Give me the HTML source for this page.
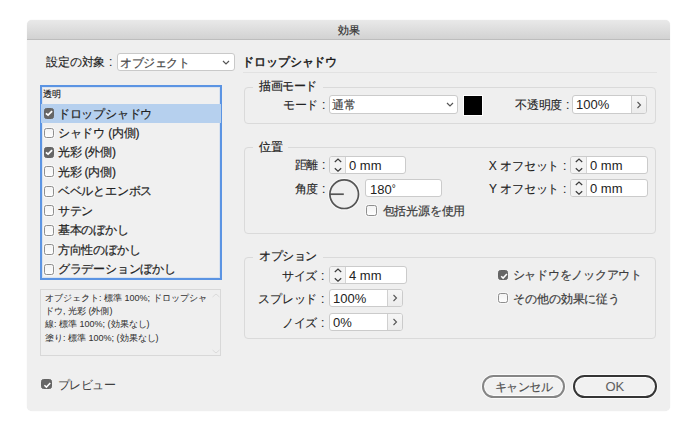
<!DOCTYPE html>
<html lang="ja">
<head>
<meta charset="utf-8">
<style>
*{box-sizing:border-box;margin:0;padding:0}
html,body{width:700px;height:436px;background:#fff;overflow:hidden}
body{font-family:"Liberation Sans",sans-serif;font-size:11px;color:#333;position:relative}
.a{position:absolute;white-space:nowrap}
#dlg{position:absolute;left:27px;top:20px;width:643px;height:391px;background:#efefef;border-radius:5px;box-shadow:0 0 1px rgba(0,0,0,.12)}
#title{position:absolute;left:27px;top:20px;width:643px;height:20px;border-radius:5px 5px 0 0;background:linear-gradient(#e9e9e9,#d2d2d2);border-bottom:1px solid #bdbdbd}
.lbl{font-size:12px;color:#222;line-height:14px;letter-spacing:-0.3px;word-spacing:1px;-webkit-text-stroke:0.1px #222}
.sel{background:#fff;border:1px solid #c9c9c9;border-radius:3px}
.grp{position:absolute;border:1.2px solid #dadada;border-radius:4px;background:#efefef}
.leg{position:absolute;background:#efefef;padding:0 6px;font-size:12px;letter-spacing:-0.5px;color:#222;line-height:13px;-webkit-text-stroke:0.2px #222}
.inp{position:absolute;background:#fff;border:1px solid #cbcbcb;border-radius:3px}
.cb{position:absolute;width:10.8px;height:10.8px;margin:-0.4px 0 0 -0.4px;border:1.5px solid #8e8e8e;border-radius:2.5px;background:linear-gradient(#f3f3f3,#fdfdfd);box-shadow:0 0 0 1px rgba(255,255,255,.5)}
.cb.on{background:#666;border-color:#646464;width:10.4px;height:10.4px;margin:-0.2px 0 0 -0.2px;box-shadow:none}
.cb.on svg{position:absolute;left:0;top:0}
.item{position:absolute;left:57.8px;font-size:12px;color:#222;line-height:14px;-webkit-text-stroke:0.2px #222;letter-spacing:-0.2px}
.chev{position:absolute}
</style>
</head>
<body>
<div id="dlg"></div>
<div id="title"></div>
<div class="a" style="left:337.5px;top:24px;font-size:11px;color:#333;line-height:13px;-webkit-text-stroke:0.2px #333">効果</div>

<!-- top row -->
<div class="a lbl" style="right:588px;top:55px">設定の対象 :</div>
<div class="a sel" style="left:116.5px;top:53px;width:118px;height:18px"></div>
<div class="a" style="left:120px;top:55.5px;font-size:12px;color:#4a4a4a;line-height:14px;letter-spacing:-0.4px;-webkit-text-stroke:0.2px #4a4a4a">オブジェクト</div>
<svg class="a" style="left:222px;top:60px" width="8" height="5" viewBox="0 0 8 5"><path d="M1 1 L4 4 L7 1" fill="none" stroke="#555" stroke-width="1.2"/></svg>
<div class="a" style="left:242px;top:55px;font-size:12px;color:#1a1a1a;line-height:14px;-webkit-text-stroke:0.45px #1a1a1a;letter-spacing:-0.1px">ドロップシャドウ</div>
<div class="a" style="left:243px;top:72px;width:414px;height:1px;background:#e2e2e2"></div>

<!-- effects list -->
<div class="a" style="left:39.5px;top:84.5px;width:182.5px;height:195.5px;border:2px solid #5b94e3;background:#f0f0f0;box-shadow:inset 0 0 0 1px rgba(170,200,240,.3)"></div>
<div class="a" style="left:42.5px;top:89px;font-size:9px;color:#1a1a1a;line-height:11px;-webkit-text-stroke:0.15px #1a1a1a">透明</div>
<div class="a" style="left:41px;top:104.2px;width:179.5px;height:19.3px;background:#b6d0ee"></div>
<div class="cb on" style="left:44px;top:108.5px"><svg width="10" height="10" viewBox="0 0 10 10" style="position:absolute;left:-1px;top:-1px"><path d="M1.9 5.3 L4.1 7.2 L8.1 3.1" fill="none" stroke="#fff" stroke-width="1.7"/></svg></div>
<div class="item" style="top:106.5px">ドロップシャドウ</div>
<div class="cb" style="left:44px;top:128.0px"></div>
<div class="item" style="top:126.0px">シャドウ (内側)</div>
<div class="cb on" style="left:44px;top:147.4px"><svg width="10" height="10" viewBox="0 0 10 10" style="position:absolute;left:-1px;top:-1px"><path d="M1.9 5.3 L4.1 7.2 L8.1 3.1" fill="none" stroke="#fff" stroke-width="1.7"/></svg></div>
<div class="item" style="top:145.4px">光彩 (外側)</div>
<div class="cb" style="left:44px;top:166.8px"></div>
<div class="item" style="top:164.8px">光彩 (内側)</div>
<div class="cb" style="left:44px;top:186.3px"></div>
<div class="item" style="top:184.3px">ベベルとエンボス</div>
<div class="cb" style="left:44px;top:205.8px"></div>
<div class="item" style="top:203.8px">サテン</div>
<div class="cb" style="left:44px;top:225.2px"></div>
<div class="item" style="top:223.2px">基本のぼかし</div>
<div class="cb" style="left:44px;top:244.7px"></div>
<div class="item" style="top:242.7px">方向性のぼかし</div>
<div class="cb" style="left:44px;top:264.1px"></div>
<div class="item" style="top:262.1px">グラデーションぼかし</div>

<!-- description -->
<div class="a" style="left:40px;top:289px;width:181px;height:67px;border:1px solid #d8d8d8;background:#efefef"></div>
<svg class="a" style="left:212px;top:293px" width="8" height="61" viewBox="0 0 8 61"><path d="M0.5 4 L4 1 L7.5 4 M0.5 57 L4 60 L7.5 57" fill="none" stroke="#dadada" stroke-width="1"/></svg>
<div class="a" style="left:45px;top:292.3px;font-size:9px;color:#333;line-height:13.1px;-webkit-text-stroke:0.05px #333">オブジェクト: 標準 100%; ドロップシャ<br>ドウ, 光彩 (外側)<br>線: 標準 100%; (効果なし)<br>塗り: 標準 100%; (効果なし)</div>

<!-- preview -->
<div class="cb on" style="left:41px;top:379px;width:11px;height:10px"><svg width="11" height="10" viewBox="0 0 11 10"><path d="M2.4 5.2 L4.4 7.1 L8.3 2.9" fill="none" stroke="#fff" stroke-width="1.5"/></svg></div>
<div class="a" style="left:57.5px;top:377.5px;font-size:12px;color:#404040;line-height:14px;letter-spacing:-0.4px;-webkit-text-stroke:0.05px #404040">プレビュー</div>

<!-- group: 描画モード -->
<div class="grp" style="left:243.5px;top:87px;width:412.5px;height:36.7px"></div>
<div class="leg" style="left:253px;top:80px">描画モード</div>
<div class="a lbl" style="right:375px;top:98px">モード :</div>
<div class="inp" style="left:328.7px;top:95px;width:129.3px;height:18.7px"></div>
<div class="a" style="left:332.3px;top:97.7px;font-size:12px;color:#4a4a4a;line-height:14px;-webkit-text-stroke:0.2px #4a4a4a">通常</div>
<svg class="a" style="left:446px;top:102px" width="8" height="5" viewBox="0 0 8 5"><path d="M1 1 L4 4 L7 1" fill="none" stroke="#555" stroke-width="1.2"/></svg>
<div class="a" style="left:463px;top:95px;width:20px;height:21px;background:#000;border:1px solid #fff"></div>
<div class="a lbl" style="right:131px;top:98px">不透明度 :</div>
<div class="inp" style="left:572px;top:95px;width:75px;height:19px;overflow:hidden"><div style="position:absolute;left:58px;top:0;width:16px;height:17px;border-left:1px solid #d0d0d0;background:linear-gradient(#f6f6f6,#ececec)"></div></div>
<div class="a" style="left:576px;top:97px;font-size:13px;color:#222;line-height:15px">100%</div>
<svg class="a" style="left:636px;top:101px" width="6" height="8" viewBox="0 0 6 8"><path d="M1.5 1 L4.5 4 L1.5 7" fill="none" stroke="#555" stroke-width="1.1"/></svg>

<!-- group: 位置 -->
<div class="grp" style="left:243.5px;top:147px;width:412.5px;height:86.5px"></div>
<div class="leg" style="left:253px;top:141px">位置</div>
<div class="a lbl" style="right:375px;top:158px">距離 :</div>
<div class="inp" style="left:329px;top:156px;width:77px;height:18px;overflow:hidden"><div style="position:absolute;left:0;top:0;width:16px;height:16px;border-right:1px solid #d4d4d4;background:#f3f3f3"></div></div>
<svg class="a" style="left:333.5px;top:158px" width="8" height="14" viewBox="0 0 8 14"><path d="M0.8 4 L4 1 L7.2 4 M0.8 10.2 L4 13.2 L7.2 10.2" fill="none" stroke="#3a3a3a" stroke-width="1.2"/></svg>
<div class="a" style="left:349px;top:158px;font-size:13px;color:#222;line-height:15px">0 mm</div>

<div class="a lbl" style="right:375px;top:182px">角度 :</div>
<svg class="a" style="left:327px;top:178px" width="35" height="35" viewBox="0 0 35 35"><circle cx="17.2" cy="16.2" r="15.6" fill="none" stroke="#fafafa" stroke-width="1.2"/><circle cx="17.2" cy="16.2" r="14.3" fill="none" stroke="#555" stroke-width="1.7"/><path d="M3 16.2 H16.8" stroke="#555" stroke-width="1.7"/></svg>
<div class="inp" style="left:365px;top:179px;width:77px;height:18px"></div>
<div class="a" style="left:370px;top:181px;font-size:13px;color:#222;line-height:15px">180<span style="font-size:10px;vertical-align:2px">°</span></div>
<div class="cb" style="left:366.5px;top:205.5px"></div>
<div class="a" style="left:382.5px;top:204px;font-size:12px;color:#3c3c3c;line-height:14px;letter-spacing:-0.2px;-webkit-text-stroke:0.2px #3c3c3c">包括光源を使用</div>

<div class="a lbl" style="right:134px;top:159px">X オフセット :</div>
<div class="inp" style="left:570px;top:156px;width:78px;height:18px;overflow:hidden"><div style="position:absolute;left:0;top:0;width:16px;height:16px;border-right:1px solid #d4d4d4;background:#f3f3f3"></div></div>
<svg class="a" style="left:574.5px;top:158px" width="8" height="14" viewBox="0 0 8 14"><path d="M0.8 4 L4 1 L7.2 4 M0.8 10.2 L4 13.2 L7.2 10.2" fill="none" stroke="#3a3a3a" stroke-width="1.2"/></svg>
<div class="a" style="left:590px;top:158px;font-size:13px;color:#222;line-height:15px">0 mm</div>

<div class="a lbl" style="right:134px;top:182px">Y オフセット :</div>
<div class="inp" style="left:570px;top:179px;width:78px;height:18px;overflow:hidden"><div style="position:absolute;left:0;top:0;width:16px;height:16px;border-right:1px solid #d4d4d4;background:#f3f3f3"></div></div>
<svg class="a" style="left:574.5px;top:181px" width="8" height="14" viewBox="0 0 8 14"><path d="M0.8 4 L4 1 L7.2 4 M0.8 10.2 L4 13.2 L7.2 10.2" fill="none" stroke="#3a3a3a" stroke-width="1.2"/></svg>
<div class="a" style="left:590px;top:181px;font-size:13px;color:#222;line-height:15px">0 mm</div>

<!-- group: オプション -->
<div class="grp" style="left:243.5px;top:257px;width:412.5px;height:82px"></div>
<div class="leg" style="left:253px;top:250px">オプション</div>
<div class="a lbl" style="right:376px;top:269px">サイズ :</div>
<div class="inp" style="left:329px;top:266px;width:78px;height:18px;overflow:hidden"><div style="position:absolute;left:0;top:0;width:16px;height:16px;border-right:1px solid #d4d4d4;background:#f3f3f3"></div></div>
<svg class="a" style="left:333.5px;top:268px" width="8" height="14" viewBox="0 0 8 14"><path d="M0.8 4 L4 1 L7.2 4 M0.8 10.2 L4 13.2 L7.2 10.2" fill="none" stroke="#3a3a3a" stroke-width="1.2"/></svg>
<div class="a" style="left:349px;top:268px;font-size:13px;color:#222;line-height:15px">4 mm</div>

<div class="a lbl" style="right:376px;top:292px">スプレッド :</div>
<div class="inp" style="left:329px;top:289px;width:74px;height:18px;overflow:hidden"><div style="position:absolute;left:57px;top:0;width:16px;height:16px;border-left:1px solid #d0d0d0;background:linear-gradient(#f6f6f6,#ececec)"></div></div>
<div class="a" style="left:333px;top:291px;font-size:13px;color:#222;line-height:15px">100%</div>
<svg class="a" style="left:392px;top:294px" width="6" height="8" viewBox="0 0 6 8"><path d="M1.5 1 L4.5 4 L1.5 7" fill="none" stroke="#555" stroke-width="1.1"/></svg>

<div class="a lbl" style="right:376px;top:316px">ノイズ :</div>
<div class="inp" style="left:329px;top:313px;width:74px;height:18px;overflow:hidden"><div style="position:absolute;left:57px;top:0;width:16px;height:16px;border-left:1px solid #d0d0d0;background:linear-gradient(#f6f6f6,#ececec)"></div></div>
<div class="a" style="left:333px;top:315px;font-size:13px;color:#222;line-height:15px">0%</div>
<svg class="a" style="left:392px;top:318px" width="6" height="8" viewBox="0 0 6 8"><path d="M1.5 1 L4.5 4 L1.5 7" fill="none" stroke="#555" stroke-width="1.1"/></svg>

<div class="cb on" style="left:498px;top:270px"><svg width="10" height="10" viewBox="0 0 10 10"><path d="M2.2 5.2 L4.1 7.1 L7.9 2.9" fill="none" stroke="#fff" stroke-width="1.5"/></svg></div>
<div class="a" style="left:512.5px;top:268px;font-size:12px;color:#3c3c3c;line-height:14px;letter-spacing:-0.25px;-webkit-text-stroke:0.2px #3c3c3c">シャドウをノックアウト</div>
<div class="cb" style="left:498px;top:293px"></div>
<div class="a" style="left:513px;top:291.5px;font-size:12px;color:#3c3c3c;line-height:14px;letter-spacing:-0.1px;-webkit-text-stroke:0.2px #3c3c3c">その他の効果に従う</div>

<!-- buttons -->
<div class="a" style="left:481.5px;top:374.5px;width:83.5px;height:23.5px;border:2px solid #858585;border-radius:12px;background:#f1f1f1;box-shadow:0 0 0 1px #fafafa, inset 0 0 0 1px #fbfbfb"></div>
<div class="a" style="left:494.5px;top:380px;font-size:12px;color:#505050;line-height:14px;letter-spacing:-0.5px;-webkit-text-stroke:0.15px #505050">キャンセル</div>
<div class="a" style="left:573px;top:374.5px;width:84px;height:23px;border:2.4px solid #353535;border-radius:12px;background:#f1f1f1;box-shadow:0 0 0 1px #fafafa, inset 0 0 0 1px #fbfbfb"></div>
<div class="a" style="left:605.5px;top:379px;font-size:13px;color:#606060;line-height:15px;-webkit-text-stroke:0.05px #606060">OK</div>
</body>
</html>
